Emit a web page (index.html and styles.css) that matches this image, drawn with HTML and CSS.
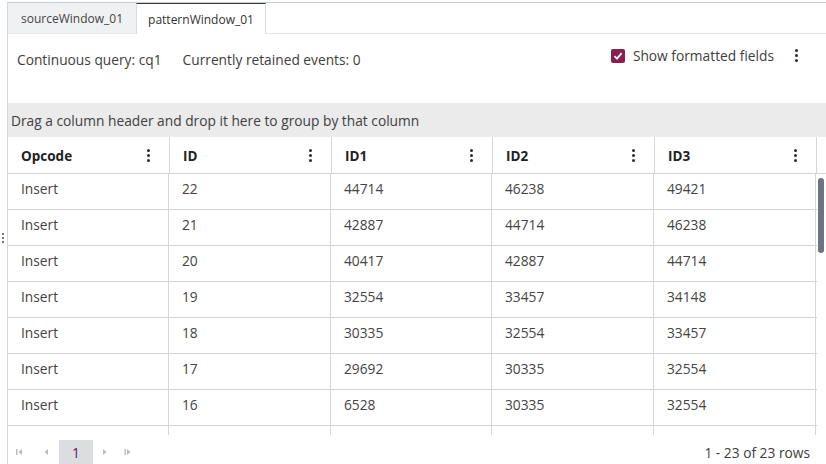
FILE: index.html
```html
<!DOCTYPE html>
<html>
<head>
<meta charset="utf-8">
<link rel="stylesheet" href="styles.css">
</head>
<body>
<div class="frame">
  <div class="side-handle"><span></span><span></span><span></span></div>
  <div class="panel">
    <div class="tabs">
      <div class="tab">sourceWindow_01</div>
      <div class="tab active">patternWindow_01</div>
      <div class="tab-fill"></div>
    </div>
    <div class="info">
      <div class="info-left">
        <span>Continuous query: cq1</span>
        <span>Currently retained events: 0</span>
      </div>
      <div class="info-right">
        <span class="checkbox"><svg width="10" height="10" viewBox="0 0 10 10"><path d="M1.5 5.2 L4 7.6 L8.6 2.2" fill="none" stroke="#fff" stroke-width="1.8"/></svg></span>
        <span class="cb-label">Show formatted fields</span>
        <span class="kebab big"><i></i><i></i><i></i></span>
      </div>
    </div>
    <div class="groupbar">Drag a column header and drop it here to group by that column</div>
    <div class="grid">
      <div class="head">
        <div class="hc">Opcode<span class="kebab"><i></i><i></i><i></i></span></div>
        <div class="hc">ID<span class="kebab"><i></i><i></i><i></i></span></div>
        <div class="hc">ID1<span class="kebab"><i></i><i></i><i></i></span></div>
        <div class="hc">ID2<span class="kebab"><i></i><i></i><i></i></span></div>
        <div class="hc">ID3<span class="kebab"><i></i><i></i><i></i></span></div>
        <div class="hc spacer"></div>
      </div>
      <div class="body">
        <div class="rows">
          <div class="row"><div>Insert</div><div>22</div><div>44714</div><div>46238</div><div>49421</div></div>
          <div class="row"><div>Insert</div><div>21</div><div>42887</div><div>44714</div><div>46238</div></div>
          <div class="row"><div>Insert</div><div>20</div><div>40417</div><div>42887</div><div>44714</div></div>
          <div class="row"><div>Insert</div><div>19</div><div>32554</div><div>33457</div><div>34148</div></div>
          <div class="row"><div>Insert</div><div>18</div><div>30335</div><div>32554</div><div>33457</div></div>
          <div class="row"><div>Insert</div><div>17</div><div>29692</div><div>30335</div><div>32554</div></div>
          <div class="row"><div>Insert</div><div>16</div><div>6528</div><div>30335</div><div>32554</div></div>
          <div class="row"><div></div><div></div><div></div><div></div><div></div></div>
        </div>
        <div class="track"><div class="thumb"></div></div>
      </div>
    </div>
    <div class="footer">
      <div class="pager">
        <span class="pg p1"><svg width="8" height="8" viewBox="0 0 8 8"><rect x="0" y="1" width="1.4" height="6" fill="#b8bcc2"/><path d="M6 1 L2.5 4 L6 7 Z" fill="#b8bcc2"/></svg></span>
        <span class="pg p2"><svg width="8" height="8" viewBox="0 0 8 8"><path d="M6 1 L2.5 4 L6 7 Z" fill="#b8bcc2"/></svg></span>
        <span class="pg page">1</span>
        <span class="pg p4"><svg width="8" height="8" viewBox="0 0 8 8"><path d="M2 1 L5.5 4 L2 7 Z" fill="#b8bcc2"/></svg></span>
        <span class="pg p5"><svg width="8" height="8" viewBox="0 0 8 8"><rect x="0.5" y="1" width="1.4" height="6" fill="#b8bcc2"/><path d="M3 1 L6.5 4 L3 7 Z" fill="#b8bcc2"/></svg></span>
      </div>
      <div class="count">1 - 23 of 23 rows</div>
    </div>
  </div>
</div>
</body>
</html>
```
FILE: styles.css
```css
html, body {
  margin: 0;
  padding: 0;
  background: #fff;
}
body {
  font-family: "Open Sans", "Liberation Sans", sans-serif;
  font-size: 13.75px;
  color: #3d3d3d;
  width: 826px;
  height: 464px;
  overflow: hidden;
}
.frame {
  position: relative;
  padding: 2px 0 0 7px;
  height: 462px;
}
.side-handle {
  position: absolute;
  left: 2px;
  top: 233px;
  display: flex;
  flex-direction: column;
  gap: 2px;
}
.side-handle span {
  width: 2px;
  height: 2px;
  background: #777;
}
.panel {
  border-left: 1px solid #d4d7dc;
  border-top: 1px solid #c7cdd5;
  height: 461px;
  display: flex;
  flex-direction: column;
}
.tabs {
  display: flex;
  height: 31px;
  flex: none;
}
.tab {
  width: 128px;
  box-sizing: border-box;
  background: #f0f1f3;
  color: #444;
  font-size: 12px;
  display: flex;
  align-items: center;
  justify-content: center;
  border-bottom: 1px solid #e6e6e6;
}
.tab.active {
  width: 130px;
  background: #fff;
  border-top: 1px solid #3a3a3a;
  border-left: 1px solid #d8dbdf;
  border-right: 1px solid #d8dbdf;
  border-bottom: none;
  color: #333;
}
.tab-fill {
  flex: 1;
  border-bottom: 1px solid #e6e6e6;
}
.info {
  height: 69px;
  flex: none;
  display: flex;
  justify-content: space-between;
  align-items: flex-start;
  padding: 0 28px 0 9px;
}
.info-left {
  display: flex;
  gap: 21px;
  margin-top: 16px;
  color: #3d3d3d;
}
.info-right {
  display: flex;
  align-items: center;
  margin-top: 12px;
}
.checkbox {
  width: 14px;
  height: 14px;
  border-radius: 2px;
  background: #8c1d51;
  display: flex;
  align-items: center;
  justify-content: center;
  margin-right: 8px;
}
.cb-label {
  color: #3d3d3d;
  margin-right: 21px;
}
.kebab {
  display: inline-flex;
  flex-direction: column;
  gap: 2px;
}
.kebab i {
  width: 3px;
  height: 3px;
  border-radius: 50%;
  background: #2b2b2b;
}
.groupbar {
  height: 34px;
  flex: none;
  background: #ebebeb;
  box-sizing: border-box;
  display: flex;
  align-items: center;
  padding-left: 3px;
  color: #404040;
}
.grid {
  display: flex;
  flex-direction: column;
  height: 298px;
  flex: none;
  overflow: hidden;
}
.head {
  display: grid;
  grid-template-columns: 162px 162px 161px 162px 162px 1fr;
  height: 37px;
  flex: none;
  box-sizing: border-box;
  border-bottom: 1px solid #d0d4d9;
}
.hc {
  display: flex;
  align-items: center;
  justify-content: space-between;
  padding: 1px 19px 0 13px;
  border-right: 1px solid #d4d7dc;
  font-weight: 700;
  font-size: 13.5px;
  color: #222;
}
.hc.spacer {
  border-right: none;
  padding: 0;
}
.body {
  display: flex;
  flex: 1;
  overflow: hidden;
}
.rows {
  width: 809px;
  flex: none;
}
.row {
  display: grid;
  grid-template-columns: 161px 162px 161px 162px 162px;
  height: 36px;
  box-sizing: border-box;
  border-bottom: 1px solid #d0d4d9;
}
.row > div {
  display: flex;
  align-items: flex-start;
  padding: 5px 0 0 13px;
  border-right: 1px solid #d4d7dc;
  color: #444;
}
.track {
  flex: 1;
  position: relative;
}
.thumb {
  position: absolute;
  left: 1px;
  top: 4px;
  width: 6px;
  height: 75px;
  border-radius: 3px;
  background: #6b7480;
}
.footer {
  flex: 1;
  display: flex;
  justify-content: space-between;
  align-items: flex-start;
  padding: 5px 16px 0 0;
}
.pager {
  display: flex;
  align-items: center;
}
.pg {
  height: 24px;
  display: flex;
  align-items: center;
  justify-content: center;
}
.p1 { width: 24px; }
.p2 { width: 27px; }
.p4 { width: 24px; }
.p5 { width: 22px; }
.pg.page {
  width: 34px;
  background: #dcdde0;
  color: #5a1a6a;
}
.count {
  margin-top: 3px;
  color: #3d3d3d;
}
```
